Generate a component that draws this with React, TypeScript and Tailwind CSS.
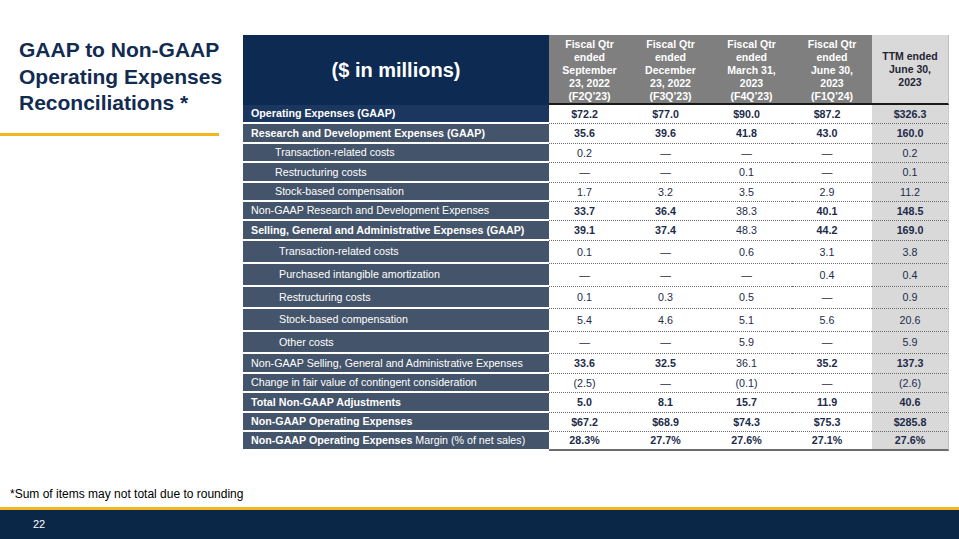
import React from "react";

type Row = {
  label: React.ReactNode;
  h: string;
  pad: string;
  bold?: boolean;
  navy?: boolean;
  vals: string[];
  valBold?: boolean;
  thin?: number[];
};

const rows: Row[] = [
  { label: "Operating Expenses (GAAP)", h: "h-[19px]", pad: "pl-[8px]", bold: true, navy: true, vals: ["$72.2", "$77.0", "$90.0", "$87.2", "$326.3"], valBold: true },
  { label: "Research and Development Expenses (GAAP)", h: "h-[20px]", pad: "pl-[8px]", bold: true, vals: ["35.6", "39.6", "41.8", "43.0", "160.0"], valBold: true },
  { label: "Transaction-related costs", h: "h-[19px]", pad: "pl-[32px]", vals: ["0.2", "—", "—", "—", "0.2"] },
  { label: "Restructuring costs", h: "h-[20px]", pad: "pl-[32px]", vals: ["—", "—", "0.1", "—", "0.1"] },
  { label: "Stock-based compensation", h: "h-[19px]", pad: "pl-[32px]", vals: ["1.7", "3.2", "3.5", "2.9", "11.2"] },
  { label: "Non-GAAP Research and Development Expenses", h: "h-[19px]", pad: "pl-[8px]", vals: ["33.7", "36.4", "38.3", "40.1", "148.5"], valBold: true, thin: [2] },
  { label: "Selling, General and Administrative Expenses (GAAP)", h: "h-[20px]", pad: "pl-[8px]", bold: true, vals: ["39.1", "37.4", "48.3", "44.2", "169.0"], valBold: true, thin: [2] },
  { label: "Transaction-related costs", h: "h-[23px]", pad: "pl-[36px]", vals: ["0.1", "—", "0.6", "3.1", "3.8"] },
  { label: "Purchased intangible amortization", h: "h-[23px]", pad: "pl-[36px]", vals: ["—", "—", "—", "0.4", "0.4"] },
  { label: "Restructuring costs", h: "h-[22px]", pad: "pl-[36px]", vals: ["0.1", "0.3", "0.5", "—", "0.9"] },
  { label: "Stock-based compensation", h: "h-[23px]", pad: "pl-[36px]", vals: ["5.4", "4.6", "5.1", "5.6", "20.6"] },
  { label: "Other costs", h: "h-[22px]", pad: "pl-[36px]", vals: ["—", "—", "5.9", "—", "5.9"] },
  { label: "Non-GAAP Selling, General and Administrative Expenses", h: "h-[20px]", pad: "pl-[8px]", vals: ["33.6", "32.5", "36.1", "35.2", "137.3"], valBold: true, thin: [2] },
  { label: "Change in fair value of contingent consideration", h: "h-[19px]", pad: "pl-[8px]", vals: ["(2.5)", "—", "(0.1)", "—", "(2.6)"] },
  { label: "Total Non-GAAP Adjustments", h: "h-[20px]", pad: "pl-[8px]", bold: true, vals: ["5.0", "8.1", "15.7", "11.9", "40.6"], valBold: true },
  { label: "Non-GAAP Operating Expenses", h: "h-[19px]", pad: "pl-[8px]", bold: true, vals: ["$67.2", "$68.9", "$74.3", "$75.3", "$285.8"], valBold: true },
  {
    label: (
      <span>
        <span className="font-bold">Non-GAAP Operating Expenses</span> Margin (% of net sales)
      </span>
    ),
    h: "h-[19px]",
    pad: "pl-[8px]",
    vals: ["28.3%", "27.7%", "27.6%", "27.1%", "27.6%"],
    valBold: true,
  },
];

const quarters = [
  ["Fiscal Qtr", "ended", "September", "23, 2022", "(F2Q’23)"],
  ["Fiscal Qtr", "ended", "December", "23, 2022", "(F3Q’23)"],
  ["Fiscal Qtr", "ended", "March 31,", "2023", "(F4Q’23)"],
  ["Fiscal Qtr", "ended", "June 30,", "2023", "(F1Q’24)"],
];

const cols = "grid grid-cols-[306px_81px_81px_81px_80px_77px]";

export default function App() {
  return (
    <div className="w-[959px] h-[539px] bg-white flex flex-col overflow-hidden font-['Liberation_Sans',Arial,sans-serif]">
      <div className="h-[487px] flex pt-[35px]">
        {/* title */}
        <div className="w-[243px] flex flex-col">
          <div className="pl-[19px] pt-[2px] text-[21px] leading-[26.5px] font-bold text-[#112b51]">
            GAAP to Non-GAAP
            <br />
            Operating Expenses
            <br />
            Reconciliations *
          </div>
          <div className="mt-[16px] w-[219px] h-[3px] bg-[#f2b71f]" />
        </div>

        {/* table */}
        <div className="w-[706px] flex flex-col">
          <div className={cols + " h-[70px]"}>
            <div className="bg-[#0d2a52] text-white font-bold text-[20px] flex items-center justify-center">
              ($ in millions)
            </div>
            {quarters.map((q, i) => (
              <div
                key={i}
                className="bg-[#7f7f7f] border-b-2 border-[#1a1a1a] text-white font-bold text-[10.5px] leading-[13px] flex flex-col items-center justify-center text-center pt-[2px]"
              >
                {q.map((l, j) => (
                  <div key={j}>{l}</div>
                ))}
              </div>
            ))}
            <div className="bg-[#d9d9d9] border-b-2 border-[#1a1a1a] border-r border-r-[#bfbfbf] text-[#1f2533] font-bold text-[10.5px] leading-[13px] flex flex-col items-center justify-center text-center">
              <div>TTM ended</div>
              <div>June 30,</div>
              <div>2023</div>
            </div>
          </div>

          {rows.map((r, i) => (
            <div key={i} className={cols + " " + r.h}>
              <div className="flex flex-col">
                <div
                  className={
                    "flex-1 flex items-center text-white text-[10.7px] whitespace-nowrap " +
                    r.pad +
                    (r.navy ? " bg-[#1b375f]" : " bg-[#44546a]") +
                    (r.bold ? " font-bold" : "")
                  }
                >
                  {r.label}
                </div>
                <div className="h-[2px]" />
              </div>
              {r.vals.map((v, j) => (
                <div
                  key={j}
                  className={
                    "flex items-center justify-center text-[10.7px] text-[#1d2b4a] border-b border-dotted border-[#6b6b6b]" +
                    (j === 4 ? " bg-[#d9d9d9] border-r border-r-[#bfbfbf]" : " pr-[10px]") +
                    (r.valBold && !(r.thin || []).includes(j) ? " font-bold" : "") +
                    (i === rows.length - 1 ? " border-b-2 border-solid border-[#1a1a1a]" : "")
                  }
                >
                  {v}
                </div>
              ))}
            </div>
          ))}
        </div>
      </div>

      <div className="h-[20px] pl-[10px] text-[12px] leading-[14px] text-black">
        *Sum of items may not total due to rounding
      </div>
      <div className="h-[3px] bg-[#f2b71f]" />
      <div className="flex-1 bg-[#0b2748] flex items-center pl-[33px] text-white text-[11px]">22</div>
    </div>
  );
}
